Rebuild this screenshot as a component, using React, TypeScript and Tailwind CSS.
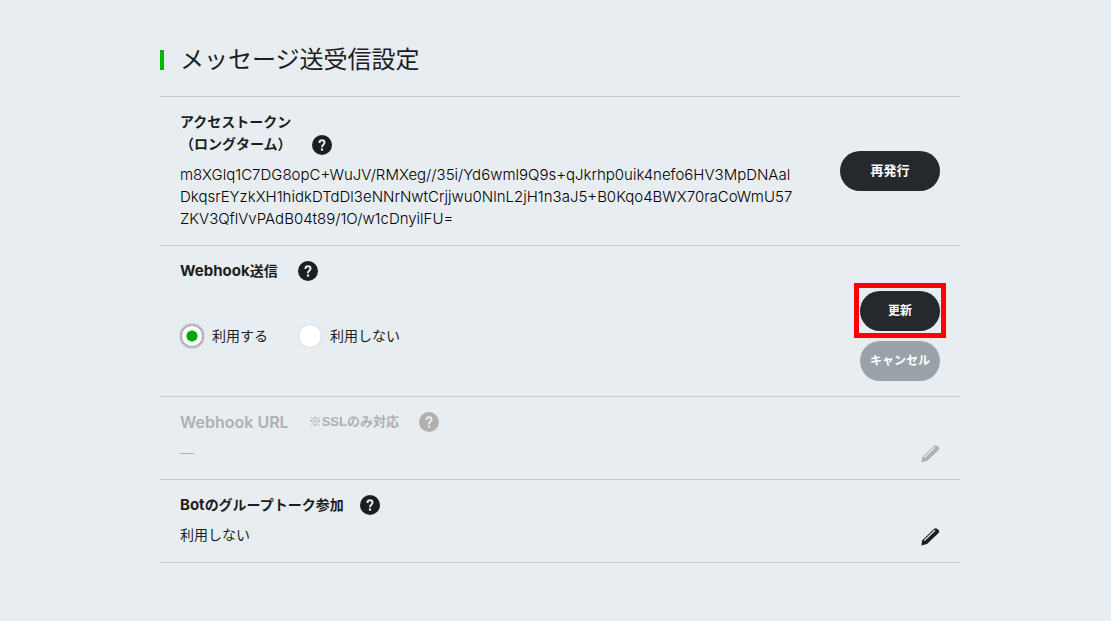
import type { ReactNode } from "react";

function HelpButton({ label, muted = false }: { label: string; muted?: boolean }) {
  return (
    <button
      type="button"
      aria-label={label}
      disabled={muted}
      className={muted ? "size-5 shrink-0 text-[#b0b0b0]" : "size-5 shrink-0 text-[#1b1e21]"}
    >
      <svg viewBox="0 0 20 20" className="size-5" aria-hidden="true">
        <circle cx="10" cy="10" r="10" fill="currentColor" />
        <path
          d="M7.500 8V7.600C7.500 6.100 8.500 5.200 10 5.200s2.500.9 2.500 2.300c0 1.100-.6 1.700-1.300 2.300-.8.7-1.200 1.200-1.200 2.500"
          fill="none"
          stroke="#e8edf1"
          strokeWidth="2"
        />
        <rect x="8.900" y="13.400" width="2.200" height="2.200" fill="#e8edf1" />
      </svg>
    </button>
  );
}

function EditButton({ label, muted = false }: { label: string; muted?: boolean }) {
  return (
    <button
      type="button"
      aria-label={label}
      disabled={muted}
      className={muted ? "size-5 text-[#b0b0b0]" : "size-5 text-[#1b1e21]"}
    >
      <svg viewBox="0 0 20 20" className="size-5" aria-hidden="true">
        <path
          d="M1.300 18.500 2.300 13.300 14.200 1.800Q15.600.6 17.200 1.800L18.700 3.300Q19.800 4.700 18.600 6L7 17Z"
          fill="currentColor"
        />
        <path d="M4.200 13.600 15 3.200" fill="none" stroke="#e8edf1" strokeWidth="1.300" />
      </svg>
    </button>
  );
}

function Latin({ children }: { children: ReactNode }) {
  return <span className="font-['Inter','Liberation_Sans',sans-serif] text-[15px]">{children}</span>;
}

function Row({ children, action }: { children: ReactNode; action: ReactNode }) {
  return (
    <section className="flex justify-between border-b border-[#c5cacf] px-5">
      <div className="min-w-0">{children}</div>
      <div className="flex shrink-0">{action}</div>
    </section>
  );
}

function WebhookOption({ id, label, checked = false }: { id: string; label: string; checked?: boolean }) {
  return (
    <div className="flex items-center gap-2">
      <input
        id={id}
        type="radio"
        name="webhook"
        defaultChecked={checked}
        className="size-6 appearance-none rounded-full border border-[#d9dde1] bg-white bg-clip-padding checked:border-2 checked:border-[#b3b7bc] checked:bg-[radial-gradient(circle,#00a900_5px,#ffffff_6px)] checked:shadow-[0_0_2px_#a0a4a8]"
      />
      <label htmlFor={id}>{label}</label>
    </div>
  );
}

const token = [
  "m8XGlq1C7DG8opC+WuJV/RMXeg//35i/Yd6wml9Q9s+qJkrhp0uik4nefo6HV3MpDNAal",
  "DkqsrEYzkXH1hidkDTdDl3eNNrNwtCrjjwu0NlnL2jH1n3aJ5+B0Kqo4BWX70raCoWmU57",
  "ZKV3QflVvPAdB04t89/1O/w1cDnyilFU=",
];

export default function App() {
  return (
    <div className="min-h-screen bg-[#e8edf1] py-12 pr-5 pl-40 font-['Liberation_Sans','Noto_Sans_CJK_JP',sans-serif] text-sm leading-[22px] text-[#1b1e21]">
      <main className="max-w-[800px]">
        <header className="flex h-[49px] items-start border-b border-[#c5cacf]">
          <h1 className="flex items-center gap-4 text-2xl leading-6">
            <span className="h-5 w-1 bg-[#00b900]" />
            メッセージ送受信設定
          </h1>
        </header>

        <Row
          action={
            <button type="button" className="mt-[54px] h-10 w-[100px] rounded-full bg-[#25282d] text-[13px] font-bold text-white">
              再発行
            </button>
          }
        >
          <div className="flex items-end gap-5 pt-[14px]">
            <h2 className="font-bold">
              アクセストークン
              <br />
              （ロングターム）
            </h2>
            <HelpButton label="アクセストークンのヘルプ" />
          </div>
          <p className="pt-[9px] pb-[15px] font-['Inter','Liberation_Sans',sans-serif] text-[15px] font-light text-black">
            {token.map((line) => (
              <span key={line} className="block">
                {line}
              </span>
            ))}
          </p>
        </Row>

        <Row
          action={
            <div className="-mr-[6px] flex flex-col items-center pt-[37px] pb-[15px]">
              <div className="border-[5px] border-[#ff0000] px-px pt-[3px] pb-[2px]">
                <button type="button" className="block h-10 w-20 rounded-full bg-[#25282d] text-xs font-bold text-white">
                  更新
                </button>
              </div>
              <button type="button" className="mt-[3px] h-10 w-20 rounded-full bg-[#9aa2a9] text-xs font-bold text-white">
                キャンセル
              </button>
            </div>
          }
        >
          <div className="flex items-center gap-5 pt-[14px]">
            <h2 className="font-bold">
              <Latin>Webhook</Latin>送信
            </h2>
            <HelpButton label="Webhook送信のヘルプ" />
          </div>
          <div role="radiogroup" aria-label="Webhook送信" className="flex gap-[30px] pt-[42px]">
            <WebhookOption id="webhook-on" label="利用する" checked />
            <WebhookOption id="webhook-off" label="利用しない" />
          </div>
        </Row>

        <Row
          action={
            <div className="flex items-end pb-[15px]">
              <EditButton label="Webhook URLを編集" muted />
            </div>
          }
        >
          <div className="flex items-center gap-5 pt-[14px] text-[#b0b0b0]">
            <h2 className="font-['Inter','Liberation_Sans',sans-serif] text-base leading-[22px] font-semibold">Webhook URL</h2>
            <span className="text-[13px] font-bold">※SSLのみ対応</span>
            <HelpButton label="Webhook URLのヘルプ" muted />
          </div>
          <p className="pt-2 pb-4 text-[#b0b0b0]">—</p>
        </Row>

        <Row
          action={
            <div className="flex items-end pb-[15px]">
              <EditButton label="Botのグループトーク参加を編集" />
            </div>
          }
        >
          <div className="flex items-center gap-4 pt-[14px]">
            <h2 className="font-bold">
              <Latin>Bot</Latin>のグループトーク参加
            </h2>
            <HelpButton label="Botのグループトーク参加のヘルプ" />
          </div>
          <p className="pt-2 pb-4">利用しない</p>
        </Row>
      </main>
    </div>
  );
}
